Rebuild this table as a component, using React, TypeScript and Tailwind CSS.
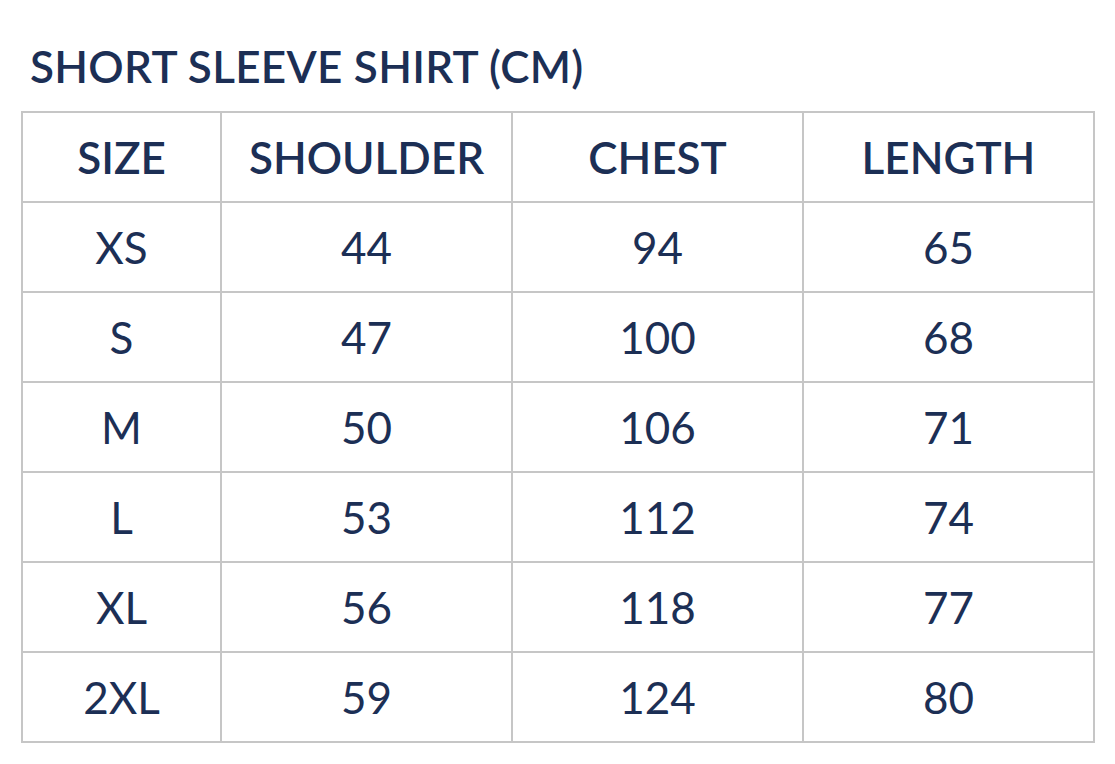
import React from "react";

const rows = [
  ["XS", "44", "94", "65"],
  ["S", "47", "100", "68"],
  ["M", "50", "106", "71"],
  ["L", "53", "112", "74"],
  ["XL", "56", "118", "77"],
  ["2XL", "59", "124", "80"],
];

export default function App() {
  return (
    <div className="w-[1115px] h-[764px] bg-white text-[#1c2f55]" style={{ fontFamily: "Lato, 'Noto Sans', sans-serif" }}>
      <div className="pt-[38px] pl-[30px] h-[111px]">
        <h1 className="text-[44px] leading-[56px] font-semibold tracking-[0.3px]">SHORT SLEEVE SHIRT (CM)</h1>
      </div>
      <table className="ml-[21px] border-collapse">
        <thead>
          <tr>
            {["SIZE", "SHOULDER", "CHEST", "LENGTH"].map((h, i) => (
              <th
                key={h}
                className={`border-2 border-[#c6c6c6] h-[90px] p-0 text-[44px] font-semibold text-center ${i === 0 ? "w-[199px]" : "w-[291px]"}`}
              >
                {h}
              </th>
            ))}
          </tr>
        </thead>
        <tbody>
          {rows.map((r) => (
            <tr key={r[0]}>
              {r.map((c, i) => (
                <td key={i} className="border-2 border-[#c6c6c6] h-[90px] p-0 text-[44px] font-normal text-center">
                  {c}
                </td>
              ))}
            </tr>
          ))}
        </tbody>
      </table>
    </div>
  );
}
